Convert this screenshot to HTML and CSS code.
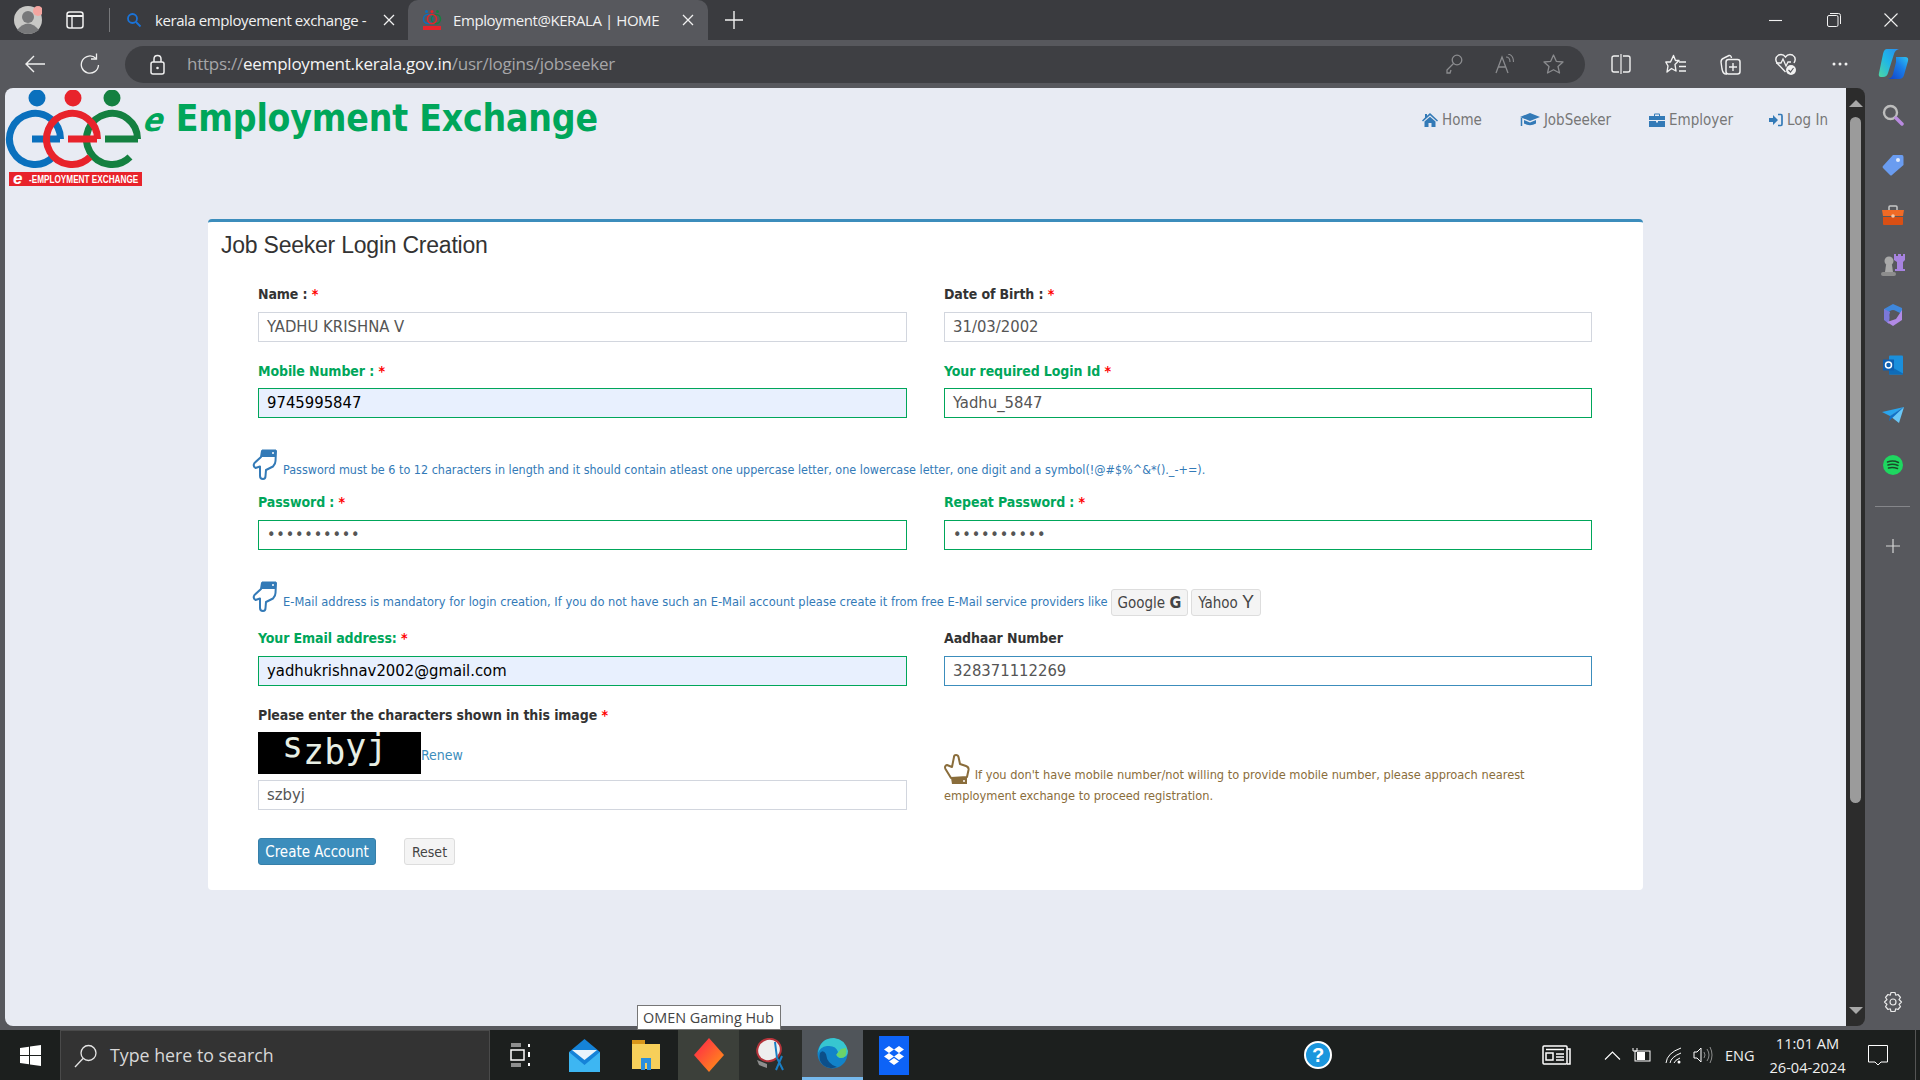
FILE: index.html
```html
<!DOCTYPE html>
<html lang="en">
<head>
<meta charset="utf-8">
<title>Employment@KERALA | HOME</title>
<link rel="stylesheet" href="styles.css">
</head>
<body>
<svg class="defs" width="0" height="0">
  <symbol id="hand" viewBox="0 0 26 32">
    <path d="M10 3 L9 9 L2.500 15 Q0.500 18 3.500 20 L8 18.500 L8 28 Q8 31 11 31 Q13.500 31 13.500 28 L14 22 L21 18.500 Q23.500 16 23.500 13 L24 3 Z" fill="#fff" fill-opacity=".6" stroke="#337ab7" stroke-width="2" stroke-linejoin="round"/>
    <path d="M10 1.500 H24 V9 H9 Z" fill="#337ab7"/>
    <circle cx="21" cy="5" r="1" fill="#fff"/>
  </symbol>
</svg>
<div class="app">
  <header class="tabbar">
    <svg class="avatar" width="28" height="30" viewBox="0 0 28 30"><circle cx="14" cy="15" r="14" fill="#c8c8c6"/><circle cx="14" cy="12" r="6" fill="#77787a"/><path d="M3 25 Q14 12 25 25 Q14 33 3 25Z" fill="#77787a"/><circle cx="24" cy="6" r="5" fill="#f4a5a0"/></svg>
    <svg class="ic-sidetab" width="18" height="18" viewBox="0 0 18 18"><rect x="1" y="1" width="16" height="16" rx="2.500" fill="none" stroke="#f1f1f1" stroke-width="1.500"/><path d="M1 5H17" stroke="#f1f1f1" stroke-width="2"/><path d="M6 5V17" stroke="#f1f1f1" stroke-width="1.400"/></svg>
    <span class="tab-sep"></span>
    <div class="tab">
      <svg width="16" height="16" viewBox="0 0 16 16"><circle cx="6.500" cy="6.500" r="4.500" fill="none" stroke="#1a73d8" stroke-width="1.800"/><path d="M10 10L14.500 14.500" stroke="#1a73d8" stroke-width="1.800"/></svg>
      <span class="tab-title">kerala employement exchange -</span>
      <svg class="tab-x" width="12" height="12" viewBox="0 0 12 12"><path d="M1 1L11 11M11 1L1 11" stroke="#f1f1f1" stroke-width="1.300"/></svg>
    </div>
    <div class="tab tab-active">
      <svg width="20" height="22" viewBox="0 0 20 22"><circle cx="4.500" cy="2.500" r="1.500" fill="#0a70bd"/><circle cx="10" cy="2.500" r="1.500" fill="#e8232b"/><circle cx="15.500" cy="2.500" r="1.500" fill="#148040"/><circle cx="6" cy="10" r="4.500" fill="none" stroke="#0a70bd" stroke-width="1.500"/><circle cx="14" cy="10" r="4.500" fill="none" stroke="#148040" stroke-width="1.500"/><circle cx="10" cy="10" r="4.500" fill="none" stroke="#e8232b" stroke-width="1.500"/><rect x="1" y="17" width="18" height="4" fill="#e8232b"/></svg>
      <span class="tab-title">Employment@KERALA | HOME</span>
      <svg class="tab-x" width="12" height="12" viewBox="0 0 12 12"><path d="M1 1L11 11M11 1L1 11" stroke="#f1f1f1" stroke-width="1.300"/></svg>
    </div>
    <svg class="ic-plus" width="18" height="18" viewBox="0 0 18 18"><path d="M9 0V18M0 9H18" stroke="#f1f1f1" stroke-width="1.400"/></svg>
    <div class="winctl">
      <svg width="13" height="13" viewBox="0 0 13 13"><path d="M0 6.500H13" stroke="#f1f1f1" stroke-width="1.100"/></svg>
      <svg width="14" height="14" viewBox="0 0 14 14"><rect x=".5" y="2.500" width="10.500" height="11" rx="1.500" fill="none" stroke="#f1f1f1"/><path d="M3 .5H11.500Q13.500 .5 13.500 2.500V11" fill="none" stroke="#f1f1f1"/></svg>
      <svg width="14" height="14" viewBox="0 0 14 14"><path d="M.5 .5L13.500 13.500M13.500 .5L.5 13.500" stroke="#f1f1f1" stroke-width="1.100"/></svg>
    </div>
  </header>

  <div class="toolbar">
    <svg class="ic-back" width="20" height="18" viewBox="0 0 20 18"><path d="M9 1L1 9L9 17M1 9H20" fill="none" stroke="#efefef" stroke-width="1.400"/></svg>
    <svg class="ic-reload" width="20" height="22" viewBox="0 0 20 22"><path d="M16 5.500A8.600 8.600 0 1 0 18.500 12" fill="none" stroke="#efefef" stroke-width="1.300"/><path d="M16.500 .5V6H11" fill="none" stroke="#efefef" stroke-width="1.300"/></svg>
    <div class="addr">
      <svg class="ic-lock" width="15" height="21" viewBox="0 0 15 21"><rect x="1" y="8" width="13" height="12" rx="2" fill="none" stroke="#efefef" stroke-width="1.500"/><path d="M4 8V5Q4 1.500 7.500 1.500T11 5V8" fill="none" stroke="#efefef" stroke-width="1.500"/><circle cx="7.500" cy="14" r="1.300" fill="#efefef"/></svg>
      <span class="url">https://<b>eemployment.kerala.gov.in</b>/usr/logins/jobseeker</span>
      <svg class="ic-key" width="18" height="20" viewBox="0 0 18 20"><circle cx="12" cy="6" r="4.800" fill="none" stroke="#8b8c8f" stroke-width="1.300"/><path d="M8.500 9.500L2 16V19H5L6 16" fill="none" stroke="#8b8c8f" stroke-width="1.300"/></svg>
      <svg class="ic-read" width="20" height="20" viewBox="0 0 20 20"><path d="M1 19L7 3L13 19M3.500 13H10.500" fill="none" stroke="#8b8c8f" stroke-width="1.300"/><path d="M11 3Q15 3 15 8M13 0Q18.500 1 18.500 8" fill="none" stroke="#8b8c8f" stroke-width="1.100"/></svg>
      <svg class="ic-star" width="21" height="20" viewBox="0 0 21 20"><path d="M10.500 1L13.300 7.300L20 8L15 12.500L16.500 19L10.500 15.700L4.500 19L6 12.500L1 8L7.700 7.300Z" fill="none" stroke="#8b8c8f" stroke-width="1.300" stroke-linejoin="round"/></svg>
    </div>
    <svg class="ic-split" width="20" height="20" viewBox="0 0 20 20"><path d="M8 2H3Q1 2 1 4V16Q1 18 3 18H8M12 2H17Q19 2 19 4V16Q19 18 17 18H12" fill="none" stroke="#f1f1f1" stroke-width="1.400"/><path d="M10 0V20" stroke="#f1f1f1" stroke-width="1.200"/></svg>
    <svg class="ic-favs" width="21" height="20" viewBox="0 0 21 20"><path d="M8.500 1.500L10.500 6.500H14L10 10.500L11 17L6.500 14.500L2 18L3 12L0.800 8H5.500Z" fill="none" stroke="#f1f1f1" stroke-width="1.400" stroke-linejoin="round"/><path d="M14 8H21M14 12.500H21M14 17H21" stroke="#f1f1f1" stroke-width="1.400"/></svg>
    <svg class="ic-coll" width="21" height="21" viewBox="0 0 21 21"><path d="M7 20H6Q3 20 2 15L1 8Q1 5 4 4L9 1.500Q11 1 11.500 4" fill="none" stroke="#f1f1f1" stroke-width="1.400"/><rect x="6" y="5.500" width="14" height="14.500" rx="2.500" fill="none" stroke="#f1f1f1" stroke-width="1.500"/><path d="M13 9V17M9 13H17" stroke="#f1f1f1" stroke-width="1.400"/></svg>
    <svg class="ic-health" width="21" height="22" viewBox="0 0 21 22"><path d="M10.500 19L2 10Q-1 5 3.500 2Q8 .5 10.500 4Q13 .5 17.500 2Q22 5 19 10" fill="none" stroke="#f1f1f1" stroke-width="1.400"/><path d="M1 10H6L8 6L11 13L13 9H16" fill="none" stroke="#f1f1f1" stroke-width="1.300"/><circle cx="16" cy="17" r="5" fill="#f1f1f1"/><path d="M13.500 17L15.500 19L18.500 15" fill="none" stroke="#57585d" stroke-width="1.200"/></svg>
    <svg class="ic-dots" width="16" height="4" viewBox="0 0 16 4"><circle cx="2" cy="2" r="1.500" fill="#f1f1f1"/><circle cx="8" cy="2" r="1.500" fill="#f1f1f1"/><circle cx="14" cy="2" r="1.500" fill="#f1f1f1"/></svg>
    <svg class="ic-copilot" width="31" height="32" viewBox="0 0 31 32"><defs><linearGradient id="cpa" x1="0" y1="1" x2="1" y2="0"><stop offset="0" stop-color="#4fd6a0"/><stop offset=".5" stop-color="#1fb6e8"/><stop offset="1" stop-color="#2a8cf0"/></linearGradient><linearGradient id="cpb" x1="0" y1="1" x2="1" y2="0"><stop offset="0" stop-color="#1240c8"/><stop offset=".6" stop-color="#1a7fe8"/><stop offset="1" stop-color="#2ec4f0"/></linearGradient></defs><path d="M9 1H21Q17 2 16 6L10 25Q9 29 5 29H3Q0 29 1 25L5 6Q6 1 9 1Z" fill="url(#cpa)"/><path d="M18 9H27Q31 9 30 13L26 27Q25 31 21 31H10Q14 30 15 26L18 14Z" fill="url(#cpb)"/></svg>
  </div>

  <div class="workspace">
    <main class="page">
      <div class="site-head">
        <svg class="logo" width="138" height="98" viewBox="4 90 138 98" aria-hidden="true">
          <circle cx="37" cy="98" r="8.500" fill="#0a70bd"/><circle cx="73" cy="98" r="8.500" fill="#e8232b"/><circle cx="112" cy="98" r="8.500" fill="#148040"/>
          <path d="M60.500 139A25.500 25.500 0 1 0 53 157M32 139H60" fill="none" stroke="#0a70bd" stroke-width="7"/>
          <path d="M137.500 139A25.500 25.500 0 1 0 130 157M105 139H138" fill="none" stroke="#148040" stroke-width="7"/>
          <path d="M97.500 139A25.500 25.500 0 1 0 90 157M68 139H97" fill="none" stroke="#e8232b" stroke-width="7"/>
          <rect x="9" y="172" width="133" height="14" fill="#e8232b"/>
          <text x="13" y="183.500" class="logo-e">e</text>
          <g transform="translate(29 183) scale(1 1.350)"><text class="logo-t">-EMPLOYMENT EXCHANGE</text></g>
        </svg>
        <h1 class="site-title"><i>e</i> Employment Exchange</h1>
        <nav class="site-nav">
          <a><svg width="16" height="14" viewBox="0 0 16 14"><path d="M8 0L16 7.500L15 8.500L8 2.300L1 8.500L0 7.500L3 4.600V1H5V2.800Z M2.500 8.500L8 3.700L13.500 8.500V14H9.500V10H6.500V14H2.500Z" fill="#337ab7"/></svg>Home</a>
          <a><svg width="20" height="16" viewBox="0 0 20 16"><path d="M10 1L20 5L10 9L0 5Z M4 8L10 10.500L16 8V11.500Q10 15 4 11.500Z" fill="#337ab7"/><path d="M1.500 6V14" stroke="#337ab7" stroke-width="1.500"/></svg>JobSeeker</a>
          <a><svg width="16" height="14" viewBox="0 0 16 14"><path d="M5 3V1.500Q5 .5 6 .5H10Q11 .5 11 1.500V3H10V1.500H6V3Z M0 3H16V7H0Z M0 8H7V9.500H9V8H16V14H0Z" fill="#337ab7"/></svg>Employer</a>
          <a><svg width="14" height="14" viewBox="0 0 14 14"><path d="M0 5H4V2L9 7L4 12V9H0Z" fill="#337ab7"/><path d="M9 1.500H12Q13 1.500 13 3V11Q13 12.500 12 12.500H9" fill="none" stroke="#337ab7" stroke-width="1.700"/></svg>Log In</a>
        </nav>
      </div>

      <section class="card">
        <h2 class="card-title">Job Seeker Login Creation</h2>
        <form class="form">
          <div class="row">
            <div class="field"><label>Name : <em>*</em></label><div class="input">YADHU KRISHNA V</div></div>
            <div class="field"><label>Date of Birth : <em>*</em></label><div class="input">31/03/2002</div></div>
          </div>
          <div class="row row-low">
            <div class="field ok"><label>Mobile Number : <em>*</em></label><div class="input auto">9745995847</div></div>
            <div class="field ok"><label>Your required Login Id <em>*</em></label><div class="input">Yadhu_5847</div></div>
          </div>
          <div class="hint">
            <svg class="hand" width="26" height="32"><use href="#hand"/></svg>
            <span class="hint-text">Password must be 6 to 12 characters in length and it should contain atleast one uppercase letter, one lowercase letter, one digit and a symbol(!@#$%^&amp;*()._-+=).</span>
          </div>
          <div class="row">
            <div class="field ok"><label>Password : <em>*</em></label><div class="input dots">••••••••••</div></div>
            <div class="field ok"><label>Repeat Password : <em>*</em></label><div class="input dots">••••••••••</div></div>
          </div>
          <div class="hint">
            <svg class="hand" width="26" height="32"><use href="#hand"/></svg>
            <span class="hint-text hint-wide">E-Mail address is mandatory for login creation, If you do not have such an E-Mail account please create it from free E-Mail service providers like</span>
            <span class="chip">Google <b>G</b></span>
            <span class="chip chip-y">Yahoo <span class="y">Y</span></span>
          </div>
          <div class="row">
            <div class="field ok"><label>Your Email address: <em>*</em></label><div class="input auto">yadhukrishnav2002@gmail.com</div></div>
            <div class="field focus"><label>Aadhaar Number</label><div class="input">328371112269</div></div>
          </div>
          <div class="row row-low">
            <div class="field">
              <label>Please enter the characters shown in this image <em>*</em></label>
              <div class="captcha-line">
                <div class="captcha"><span class="c1">s</span><span class="c2">z</span><span class="c3">b</span><span class="c4">y</span><span class="c5">j</span></div>
                <a class="renew">Renew</a>
              </div>
              <div class="input">szbyj</div>
            </div>
            <div class="note">
              <svg class="hand-up" width="26" height="31" viewBox="0 0 26 31"><path d="M10 3Q10 1 12 1Q14 1 14.500 3L16 10L22 12Q25 13 24.500 16L23 23L7 24L1.500 15Q0 12 3 11L8 13Z" fill="none" stroke="#8a6d3b" stroke-width="2" stroke-linejoin="round"/><path d="M7 24H23V30H8Z" fill="#8a6d3b"/><circle cx="20" cy="27" r="1" fill="#fff"/></svg>
              <span>If you don't have mobile number/not willing to provide mobile number, please approach nearest<br>employment exchange to proceed registration.</span>
            </div>
          </div>
          <div class="actions">
            <button type="button" class="btn btn-primary">Create Account</button>
            <button type="button" class="btn btn-default">Reset</button>
          </div>
        </form>
      </section>
    </main>
    <div class="scrollbar">
      <span class="arrow-up"></span>
      <span class="thumb"></span>
      <span class="arrow-down"></span>
    </div>
    <aside class="sidebar">
      <svg width="22" height="22" viewBox="0 0 22 22"><circle cx="8.500" cy="8.500" r="6.500" fill="none" stroke="#bdbdbd" stroke-width="2.400"/><path d="M14 14L20 20" stroke="#b98ae0" stroke-width="3.500" stroke-linecap="round"/></svg>
      <svg width="22" height="22" viewBox="0 0 22 22"><path d="M11 1H20Q21.500 1 21.500 3V11L10 21Q9 22 8 21L1 14Q0 13 1 12Z" fill="#6a9cf0"/><circle cx="16" cy="6" r="2" fill="#dfe9fb"/></svg>
      <svg width="22" height="20" viewBox="0 0 22 20"><path d="M7 5V2Q7 1 8 1H14Q15 1 15 2V5" fill="none" stroke="#c8c8c8" stroke-width="1.500"/><path d="M0 5H22L21 11H1Z" fill="#f06a25"/><path d="M1 12H21V19Q21 20 20 20H2Q1 20 1 19Z" fill="#d94f14"/><circle cx="11" cy="11" r="1.800" fill="#f5c9a8"/></svg>
      <svg width="24" height="22" viewBox="0 0 24 22"><circle cx="8" cy="7" r="4.500" fill="#a9a9a9"/><path d="M5 11H11L12 18H4Z" fill="#a9a9a9"/><rect y="18" width="15" height="4" rx="2" fill="#8d8d8d"/><path d="M13 0H15V2H17V0H20V2H22V0H24V6L22 8V15H24V17H14V15H16V8L13 6Z" fill="#a783e0"/></svg>
      <svg width="20" height="22" viewBox="0 0 20 22"><path d="M10 0L19 4V10L13 7Q10 5 7 7L1 12V5Z" fill="#3f87dc"/><path d="M1 5V16L6 20L7 8Z" fill="#7b78d8"/><path d="M19 6V16L10 22L4 18L13 15Z" fill="#b28ae6"/><circle cx="10" cy="11" r="3.500" fill="#57585d"/></svg>
      <svg width="20" height="19" viewBox="0 0 20 19"><rect x="6" width="14" height="19" rx="1" fill="#1a8fdc"/><path d="M6 10L20 18V19H6Z" fill="#0f6cb8"/><rect y="4" width="11" height="11" fill="#0f5fb0"/><circle cx="5.500" cy="9.500" r="3" fill="none" stroke="#fff" stroke-width="1.500"/></svg>
      <svg width="22" height="16" viewBox="0 0 22 16"><path d="M0 5L22 0L8 9Z" fill="#2aa5ee"/><path d="M22 0L17 16L8 9Z" fill="#6ac7f7"/><path d="M22 0L8 9L7 14Z" fill="#1170c7"/></svg>
      <svg width="20" height="20" viewBox="0 0 20 20"><circle cx="10" cy="10" r="10" fill="#1ed760"/><path d="M4.500 7Q10 5 15.500 7.500M5 10Q10 8.500 15 10.500M5.500 13Q10 12 14.500 13.500" fill="none" stroke="#1b4a2a" stroke-width="1.500" stroke-linecap="round"/></svg>
      <span class="side-div"></span>
      <svg class="side-plus" width="14" height="14" viewBox="0 0 14 14"><path d="M7 0V14M0 7H14" stroke="#d5d5d5" stroke-width="1.200"/></svg>
      <svg class="side-gear" width="20" height="21" viewBox="0 0 20 21"><path d="M8 1H12L12.700 3.700L15 3L17.500 6L16 8L18.500 10.500L16 13L17.500 15L15 18L12.700 17.300L12 20H8L7.300 17.300L5 18L2.500 15L4 13L1.500 10.500L4 8L2.500 6L5 3L7.300 3.700Z" fill="none" stroke="#e8e8e8" stroke-width="1.200" stroke-linejoin="round"/><circle cx="10" cy="10.500" r="3" fill="none" stroke="#e8e8e8" stroke-width="1.200"/></svg>
    </aside>
  </div>

  <footer class="taskbar">
    <svg class="ts-start" width="21" height="21" viewBox="0 0 21 21"><path d="M0 3L9 1.700V10H0ZM10 1.500L21 0V10H10ZM0 11H9V19.300L0 18ZM10 11H21V21L10 19.500Z" fill="#fff"/></svg>
    <div class="ts-search">
      <svg width="24" height="24" viewBox="0 0 24 24"><circle cx="14.500" cy="9" r="7.500" fill="none" stroke="#e6e6e6" stroke-width="1.300"/><path d="M9 14.500L1 23" stroke="#e6e6e6" stroke-width="1.300"/></svg>
      <span>Type here to search</span>
    </div>
    <svg class="ts-view" width="20" height="24" viewBox="0 0 20 24"><path d="M1 1H11M1 3H11M1 21H11M1 23H11" stroke="#fff" stroke-width="1"/><rect x="1" y="7" width="13" height="10" fill="none" stroke="#fff" stroke-width="1.500"/><path d="M19 1V4M19 9V14M19 20V23" stroke="#fff" stroke-width="2"/></svg>
    <svg class="ts-mail" width="31" height="33" viewBox="0 0 31 33"><path d="M15.500 0L31 13V33H0V13Z" fill="#1583d8"/><path d="M3 11H28L15.500 21Z" fill="#eaf4fb"/><path d="M0 13L15.500 26L31 13V33H0Z" fill="#3db6f2"/></svg>
    <svg class="ts-folder" width="28" height="30" viewBox="0 0 28 30"><path d="M0 0H13V5H0Z" fill="#d9961a"/><path d="M0 4H28V29H0Z" fill="#f7cf5a"/><path d="M9 18H19V30H15V23H13V30H9Z" fill="#2a8fdc"/></svg>
    <div class="ts-cell ts-dim"><svg width="30" height="34" viewBox="0 0 30 34"><defs><linearGradient id="dg" x1="0" y1="0" x2="1" y2="1"><stop offset="0" stop-color="#ff1f4d"/><stop offset="1" stop-color="#ff9a12"/></linearGradient></defs><path d="M15 0L30 17L15 34L0 17Z" fill="url(#dg)"/></svg></div>
    <div class="ts-cell ts-dim2"><svg width="32" height="34" viewBox="0 0 32 34"><ellipse cx="14" cy="12" rx="12" ry="11" fill="#eee" stroke="#b5333a" stroke-width="2" transform="rotate(-25 14 12)"/><path d="M2 22L12 26V30L4 27Z" fill="#8d8d8d"/><path d="M20 4L22 20L28 32M27 18L21 32" fill="none" stroke="#1a7fc4" stroke-width="2"/></svg></div>
    <div class="ts-cell ts-active"><svg width="31" height="33" viewBox="0 0 31 33"><circle cx="15.500" cy="16.500" r="15" fill="#1283c9"/><path d="M1 16Q3 1 17 1Q28 2 31 14Q31 21 23 21Q18 20 21 15Q19 8 10 9Q3 10 1 16Z" fill="#37c6d0"/><path d="M29 11Q31 21 23 21L19 18L24 12Z" fill="#6bd46a"/><path d="M9 17Q10 27 20 30Q12 33 6 28Q1 23 3 16Q6 12 9 17Z" fill="#0c4f8a"/></svg></div>
    <svg class="ts-drop" width="30" height="39" viewBox="0 0 30 39"><rect width="30" height="39" fill="#0d63f7"/><path d="M10 10L15 13.500L10 17L5 13.500ZM20 10L25 13.500L20 17L15 13.500ZM10 17L15 20.500L10 24L5 20.500ZM20 17L25 20.500L20 24L15 20.500ZM15 22L20 25.500L15 29L10 25.500Z" fill="#fff"/></svg>
    <svg class="ts-help" width="28" height="28" viewBox="0 0 28 28"><circle cx="14" cy="14" r="13" fill="#1b96dd" stroke="#fff" stroke-width="2"/><text x="14" y="21" class="help-q">?</text></svg>
    <svg class="ts-news" width="29" height="20" viewBox="0 0 29 20"><rect x="1" y="1" width="24" height="18" rx="1" fill="none" stroke="#fff" stroke-width="1.500"/><path d="M25 4H28V19H25" fill="none" stroke="#fff" stroke-width="1.500"/><path d="M4 4.500H22" stroke="#fff" stroke-width="1.500"/><rect x="4" y="8" width="7" height="7" fill="none" stroke="#fff" stroke-width="1.500"/><path d="M14 9H22M14 12H22M14 15H22" stroke="#fff" stroke-width="1.300"/></svg>
    <svg class="ts-chev" width="17" height="9" viewBox="0 0 17 9"><path d="M1 8.500L8.500 1L16 8.500" fill="none" stroke="#fff" stroke-width="1.100"/></svg>
    <svg class="ts-bat" width="19" height="14" viewBox="0 0 19 14"><rect x="3" y="3" width="15" height="10" fill="none" stroke="#fff"/><rect x="5" y="4" width="8" height="8" fill="#fff"/><path d="M1 0V3H5V0" stroke="#fff" fill="none"/></svg>
    <svg class="ts-wifi" width="17" height="17" viewBox="0 0 17 17"><path d="M1 16Q2 6 16 1M5 16Q6 10 16 6M9 16Q10 13 15 11" fill="none" stroke="#fff" stroke-width="1"/><circle cx="14" cy="15" r="1.500" fill="#fff"/></svg>
    <svg class="ts-vol" width="20" height="18" viewBox="0 0 20 18"><path d="M1 6H4L8 2V16L4 12H1Z" fill="none" stroke="#fff"/><path d="M11 6Q13 9 11 12M14 3Q18 9 14 15M17 1Q21 9 17 17" fill="none" stroke="#999" stroke-width=".9"/></svg>
    <span class="ts-eng">ENG</span>
    <div class="ts-clock"><span>11:01 AM</span><span>26-04-2024</span></div>
    <svg class="ts-notif" width="20" height="21" viewBox="0 0 20 21"><path d="M.5 .5H19.500V17H13L10 20L7 17H.5Z" fill="none" stroke="#fff"/></svg>
    <span class="ts-end"></span>
    <div class="tooltip">OMEN Gaming Hub</div>
  </footer>
</div>
</body>
</html>
```
FILE: styles.css
```css
* { box-sizing: border-box; }
html, body { margin: 0; height: 100%; overflow: hidden; }
body { font-family: "Open Sans", "Noto Sans", sans-serif; color: #333; }
.defs { position: absolute; }
svg { display: block; flex: none; }
.app { height: 1080px; display: flex; flex-direction: column; background: #57585d; }

/* tab strip */
.tabbar { height: 40px; background: #3a3b3f; display: flex; align-items: center; color: #f1f1f1; font-size: 15px; position: relative; }
.avatar { margin-left: 14px; }
.ic-sidetab { margin-left: 24px; }
.tab-sep { width: 1px; height: 24px; background: #77787b; margin-left: 25px; }
.tab { display: flex; align-items: center; width: 285px; height: 40px; padding-left: 16px; }
.tab-title { width: 214px; margin-left: 13px; white-space: nowrap; letter-spacing: -.42px; }
.tab-x { margin-left: 17px; }
.tab-active { background: #57585d; width: 300px; border-radius: 10px 10px 0 0; margin-left: 13px; padding-left: 14px; }
.tab-active .tab-title { margin-left: 11px; }
.tab-active .tab-x { margin-left: 15px; }
.ic-plus { margin-left: 17px; }
.winctl { margin-left: auto; display: flex; align-items: center; gap: 43px; padding-right: 22px; }
.winctl svg:nth-child(2) { margin-left: 2px; }

/* toolbar */
.toolbar { height: 48px; display: flex; align-items: center; background: #57585d; }
.ic-back { margin-left: 25px; }
.ic-reload { margin-left: 35px; }
.addr { width: 1460px; height: 37px; margin-left: 25px; background: #3e3f43; border-radius: 19px; display: flex; align-items: center; }
.ic-lock { margin-left: 25px; }
.url { margin-left: 22px; font-size: 17px; line-height: 36px; color: #a6a6a8; letter-spacing: -.24px; white-space: nowrap; width: 1133px; }
.url b { font-weight: 400; color: #f4f4f4; }
.ic-key { margin-left: 125px; }
.ic-read { margin-left: 32px; }
.ic-star { margin-left: 28px; }
.ic-split { margin-left: 26px; }
.ic-favs { margin-left: 34px; }
.ic-coll { margin-left: 34px; }
.ic-health { margin-left: 34px; }
.ic-dots { margin-left: 36px; }
.ic-copilot { margin-left: 30px; }

/* workspace */
.workspace { height: 938px; display: flex; padding-left: 5px; }
.page { width: 1841px; background: #e8ebf3; border-radius: 8px 0 0 8px; display: flex; flex-direction: column; font-family: "DejaVu Sans Condensed", "DejaVu Sans", sans-serif; font-size: 14px; }
.site-head { height: 131px; display: flex; align-items: flex-start; }
.logo { margin-top: 2px; margin-left: -1px; }
.logo-e { font: italic 700 17px "Liberation Sans", sans-serif; fill: #fff; }
.logo-t { font: 700 8.200px "Liberation Sans", sans-serif; fill: #fff; }
.site-title { margin: 7px 0 0 3px; font-size: 37px; line-height: 48px; font-weight: 700; color: #00a65a; white-space: nowrap; letter-spacing: -.2px; }
.site-title i { display: inline-block; font-size: 32px; transform: skewX(-12deg); }
.site-nav { margin-left: auto; display: flex; padding: 22px 18px 0 0; font-size: 15px; color: #777; }
.site-nav a { display: flex; align-items: center; gap: 4px; height: 20px; margin-left: 38px; }
.site-nav a:last-child { margin-left: 36px; }

.card { margin-left: 203px; width: 1435px; height: 671px; background: #fff; border-top: 3px solid #3c8dbc; border-radius: 4px; }
.card-title { margin: 0; padding: 11px 0 0 13px; height: 46px; font: 400 23px/24px "Liberation Sans", Arial, sans-serif; color: #333; letter-spacing: -.23px; }
.form { padding: 17px 51px 0 50px; }
.row { display: grid; grid-template-columns: 649px 648px; column-gap: 37px; }
.row + .row { margin-top: 19px; }
.field label { display: block; height: 20px; margin-bottom: 7px; font-weight: 700; line-height: 19px; color: #333; letter-spacing: -.1px; white-space: nowrap; }
.row-low .field label { line-height: 21px; }
.field em { font-style: normal; color: #f00; }
.field.ok label { color: #00a65a; }
.input { height: 30px; border: 1px solid #d2d6de; padding: 0 8px; line-height: 27px; font-size: 16.500px; color: #555; background: #fff; white-space: nowrap; }
.field.ok .input { border-color: #00a65a; }
.field.focus .input { border-color: #3c8dbc; }
.input.auto { background: #e8f0fe; color: #000; }
.input.dots { font-size: 16px; line-height: 28px; letter-spacing: .850px; color: #555; }

.hint { display: flex; align-items: flex-start; margin: 30px 0 13px -6px; color: #337ab7; font-size: 12.470px; white-space: nowrap; }
.hint-text { margin: 12px 0 0 5px; line-height: 20px; }
.hint-wide { font-size: 12.750px; }
.chip { margin: 9px 0 0 3px; height: 27px; line-height: 25px; padding: 0 6px; background: #f4f4f4; border: 1px solid #ddd; border-radius: 3px; color: #444; font-size: 15px; }
.chip:first-of-type { margin-left: 5px; }
.chip b { font-size: 16px; }
.chip .y { font-size: 18px; font-family: "Liberation Sans", sans-serif; }

.captcha-line { display: flex; align-items: flex-end; margin-bottom: 6px; }
.captcha { width: 163px; height: 42px; background: #000; display: flex; padding-left: 24px; color: #e8efe4; font: 400 35px/36px "DejaVu Sans Mono", monospace; }
.captcha span { display: block; }
.c1 { transform: translateY(-5px); }
.c2 { transform: translateY(2px); }
.c3 { transform: translateY(2px); }
.c4 { transform: translateY(-3px); }
.c5 { transform: translateY(-3px); }
.renew { color: #3c8dbc; font-size: 14px; line-height: 20px; margin-bottom: 9px; }

.note { margin-top: 49px; color: #8a6d3b; font-size: 12.700px; line-height: 21px; }
.hand-up { display: inline-block; vertical-align: -6px; margin-right: 1px; }
.note span { white-space: nowrap; }

.actions { display: flex; margin-top: 28px; }
.btn { height: 27px; font: inherit; padding: 0; border-radius: 3px; border: 1px solid; white-space: nowrap; }
.btn-primary { width: 118px; font-size: 15px; background: #3c8dbc; border-color: #367fa9; color: #fff; }
.btn-default { width: 51px; margin-left: 28px; font-size: 14px; background: #f4f4f4; border-color: #ddd; color: #444; }

/* scrollbar */
.scrollbar { width: 19px; background: #2c2c2c; border-radius: 0 8px 8px 0; position: relative; display: flex; flex-direction: column; align-items: center; padding-top: 12px; }
.arrow-up { width: 0; height: 0; border: 7px solid transparent; border-top: 0; border-bottom: 7px solid #a8a8a8; }
.thumb { width: 11px; height: 686px; margin-top: 10px; background: #9b9b9b; border-radius: 6px; }
.arrow-down { width: 0; height: 0; margin-top: auto; margin-bottom: 12px; border: 7px solid transparent; border-bottom: 0; border-top: 7px solid #a8a8a8; }

/* sidebar */
.sidebar { flex: 1; display: flex; flex-direction: column; align-items: center; padding-top: 16px; gap: 28px; }
.sidebar > svg { height: 22px; }
.side-div { width: 35px; height: 1px; background: #85868a; margin-top: 2px; }
.side-gear { margin-top: auto; margin-bottom: 13px; }

/* taskbar */
.taskbar { margin-top: 4px; height: 50px; background: #1c1f1e; display: flex; align-items: center; position: relative; color: #fff; }
.ts-start { margin-left: 20px; }
.ts-search { width: 430px; height: 50px; margin-left: 19px; background: #333; border: 1px solid #4a4a4a; border-width: 1px 1px 0; display: flex; align-items: center; padding-left: 13px; font-size: 17.800px; line-height: 22px; color: #d8d8d8; }
.ts-search span { margin-left: 12px; padding-bottom: 2px; }
.ts-view { margin-left: 20px; }
.ts-mail { margin-left: 39px; }
.ts-folder { margin-left: 32px; }
.ts-cell { width: 61px; height: 50px; display: flex; align-items: center; justify-content: center; }
.ts-dim { background: #3c403a; margin-left: 18px; }
.ts-dim2 { background: #2b2e2b; width: 63px; }
.ts-active { background: #50555a; border-bottom: 3px solid #76b9ed; }
.ts-drop { margin-left: 16px; }
.ts-help { margin-left: 395px; }
.help-q { font: 700 20px "Liberation Sans", sans-serif; fill: #fff; text-anchor: middle; }
.ts-news { margin-left: 210px; }
.ts-chev { margin-left: 33px; }
.ts-bat { margin-left: 11px; }
.ts-wifi { margin-left: 14px; }
.ts-vol { margin-left: 11px; }
.ts-eng { margin-left: 12px; font-size: 14.500px; color: #f0f0f0; }
.ts-clock { margin-left: 15px; width: 76px; display: flex; flex-direction: column; align-items: center; gap: 5px; font-size: 14.600px; line-height: 19px; color: #f0f0f0; white-space: nowrap; }
.ts-notif { margin-left: 22px; }
.ts-end { width: 1px; height: 50px; background: #555; margin-left: 27px; }
.tooltip { position: absolute; left: 637px; top: -25px; width: 144px; height: 25px; background: #fff; border: 1px solid #767676; color: #444; font-size: 14.400px; line-height: 23px; padding-left: 5px; white-space: nowrap; }
```
